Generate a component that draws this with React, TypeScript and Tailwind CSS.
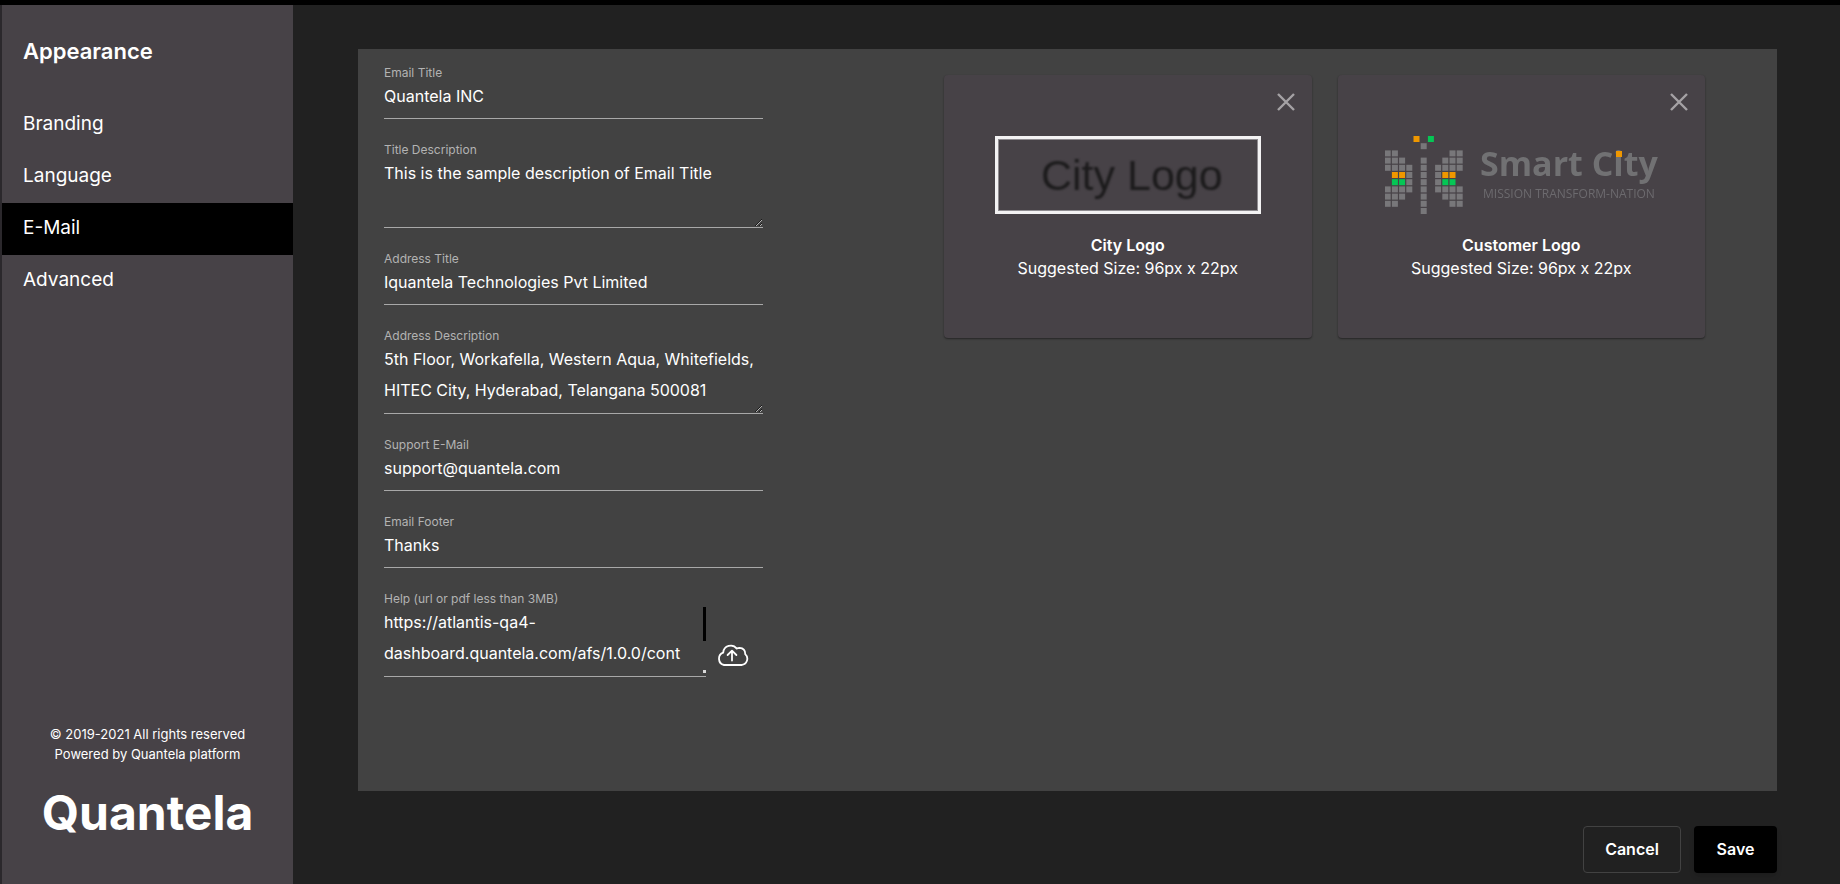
import React, { useState } from "react";

const MENU_ITEMS = ["Branding", "Language", "E-Mail", "Advanced"];

const INITIAL_VALUES = {
  emailTitle: "Quantela INC",
  titleDescription: "This is the sample description of Email Title",
  addressTitle: "Iquantela Technologies Pvt Limited",
  addressDescription:
    "5th Floor, Workafella, Western Aqua, Whitefields, HITEC City, Hyderabad, Telangana 500081",
  supportEmail: "support@quantela.com",
  emailFooter: "Thanks",
  help: "https://atlantis-qa4-dashboard.quantela.com/afs/1.0.0/cont",
};

type FormValues = typeof INITIAL_VALUES;

// g: gray, o: orange, e: green
const BUTTERFLY_ROWS = [
  "....o.e....",
  ".....g.....",
  "gg.......gg",
  "ggg..g..ggg",
  "gggg.g.gggg",
  ".oog.g.goo.",
  ".eeg.g.gee.",
  "gggg.g.gggg",
  "ggg..g..ggg",
  "gg...g...gg",
  ".....g.....",
];

const CELL_COLORS: Record<string, string> = {
  g: "#78777a",
  o: "#ef9700",
  e: "#05c655",
};

interface FieldProps {
  id: string;
  name: keyof FormValues;
  label: string;
  value: string;
  onChange: (
    e: React.ChangeEvent<HTMLInputElement | HTMLTextAreaElement>
  ) => void;
}

interface FieldLabelProps {
  htmlFor: string;
  children: React.ReactNode;
}

const FieldLabel = ({ htmlFor, children }: FieldLabelProps) => (
  <label
    htmlFor={htmlFor}
    className="block mb-0.5 text-xs leading-[13px] text-[#b3b3b3]"
  >
    {children}
  </label>
);

const InputField = ({ id, name, label, value, onChange }: FieldProps) => (
  <div>
    <FieldLabel htmlFor={id}>{label}</FieldLabel>
    <input
      id={id}
      type="text"
      name={name}
      value={value}
      onChange={onChange}
      className="block w-full h-[38px] pb-2 border-b border-[#a8a8a8] text-base text-white outline-none"
    />
  </div>
);

const TextareaField = ({ id, name, label, value, onChange }: FieldProps) => (
  <div>
    <FieldLabel htmlFor={id}>{label}</FieldLabel>
    <div className="border-b border-[#a8a8a8]">
      <textarea
        id={id}
        name={name}
        value={value}
        onChange={onChange}
        className="block w-full h-[69px] overflow-hidden resize-y text-base leading-[31px] text-white outline-none"
      />
    </div>
  </div>
);

const UploadIcon = () => (
  <svg
    viewBox="0 0 32 24"
    className="w-8 h-6"
    fill="none"
    stroke="currentColor"
    strokeWidth="1.8"
    strokeLinecap="round"
    strokeLinejoin="round"
  >
    <path d="M7 22H24.5A6.2 6.2 0 0 0 28.2 11.2Q28.4 5.2 22.6 4.8Q21 4.8 19.8 5.6A7.6 7.6 0 0 0 6.2 9.6A6.5 6.5 0 0 0 7 22Z" />
    <path d="M15 17.5V8M10.6 12L15 7.6L19.4 12" />
  </svg>
);

const CloseIcon = () => (
  <svg
    viewBox="0 0 18 18"
    className="w-[18px] h-[18px]"
    stroke="currentColor"
    strokeWidth="2.4"
  >
    <path d="M1 1L17 17M17 1L1 17" />
  </svg>
);

const CityLogo = () => (
  <svg viewBox="0 0 266 78" className="w-[266px] h-[78px]">
    <rect
      x="1.5"
      y="1.5"
      width="263"
      height="75"
      fill="none"
      stroke="#f3f2f3"
      strokeWidth="3"
    />
    <rect
      x="3.5"
      y="3.5"
      width="259"
      height="71"
      fill="none"
      stroke="#8f8c90"
    />
    <text
      x="46"
      y="54"
      fill="#1c1b1c"
      className="font-['Liberation_Sans',sans-serif] text-[43px] blur-[1px]"
    >
      City Logo
    </text>
  </svg>
);

const SmartCityLogo = () => (
  <svg viewBox="0 0 273 78" className="w-[273px] h-[78px]">
    <g className="blur-[0.7px]">
      {BUTTERFLY_ROWS.map((row, y) =>
        row
          .split("")
          .map((cell, x) =>
            cell === "." ? null : (
              <rect
                key={`${x}-${y}`}
                x={x * 7.2 - 0.3}
                y={y * 7.2}
                width="6"
                height="6"
                fill={CELL_COLORS[cell]}
              />
            )
          )
      )}
      <text
        x="95"
        y="40"
        fill="#717173"
        className="font-['Open_Sans',sans-serif] font-bold text-[34px]"
      >
        Smart City
      </text>
      <rect x="231" y="15" width="6" height="6" fill="#ef9700" />
      <text
        x="98"
        y="62"
        fill="#6c6a6e"
        className="font-['Open_Sans',sans-serif] text-xs"
      >
        MISSION TRANSFORM-NATION
      </text>
    </g>
  </svg>
);

interface LogoCardProps {
  title: string;
  children: React.ReactNode;
}

const LogoCard = ({ title, children }: LogoCardProps) => (
  <div className="relative flex-1 h-[263px] pt-[61px] flex flex-col items-center rounded bg-[#474247] shadow-[0_1px_2px_rgba(0,0,0,0.45)]">
    <button
      type="button"
      aria-label={`Remove ${title}`}
      className="absolute top-[18px] right-[17px] text-[#a5a2a5]"
    >
      <CloseIcon />
    </button>
    {children}
    <h3 className="mt-5 text-base leading-[23px] font-semibold">{title}</h3>
    <p className="text-base leading-[23px]">Suggested Size: 96px x 22px</p>
  </div>
);

const App = () => {
  const [selectedMenu, setSelectedMenu] = useState("E-Mail");
  const [values, setValues] = useState<FormValues>(INITIAL_VALUES);

  const handleChange = (
    e: React.ChangeEvent<HTMLInputElement | HTMLTextAreaElement>
  ) => {
    const { name, value } = e.target;
    setValues({ ...values, [name]: value });
  };

  const fieldProps = (name: keyof FormValues) => ({
    id: name,
    name,
    value: values[name],
    onChange: handleChange,
  });

  return (
    <div className="min-h-screen flex flex-col bg-[#212121] text-white font-['Inter',sans-serif]">
      <div className="h-[5px] bg-black" />

      <div className="flex-1 flex">
        <aside className="w-[293px] shrink-0 flex flex-col border-l-2 border-[#2b282c] bg-[#474247]">
          <h1 className="pl-[21px] pt-8 text-[22px] leading-7 font-semibold">
            Appearance
          </h1>

          <nav className="mt-[34px] flex flex-col">
            {MENU_ITEMS.map((item) => (
              <a
                key={item}
                href="#"
                onClick={() => setSelectedMenu(item)}
                className={`h-[52px] pl-[21px] pb-0.5 flex items-center text-[19px] ${
                  item === selectedMenu ? "bg-black" : ""
                }`}
              >
                {item}
              </a>
            ))}
          </nav>

          <footer className="mt-auto mb-[42px] text-center">
            <p className="text-[13px] leading-5">
              © 2019-2021 All rights reserved
            </p>
            <p className="text-[13px] leading-5">
              Powered by Quantela platform
            </p>
            <p className="mt-5 text-5xl leading-[58px] font-bold">Quantela</p>
          </footer>
        </aside>

        <main className="flex-1 flex flex-col pl-[65px] pr-[63px] pt-11 pb-[11px]">
          <section className="flex-1 flex justify-between pl-[26px] pr-[72px] bg-[#424242]">
            <form className="w-[379px] pt-[17px] flex flex-col gap-6">
              <InputField label="Email Title" {...fieldProps("emailTitle")} />
              <TextareaField
                label="Title Description"
                {...fieldProps("titleDescription")}
              />
              <InputField
                label="Address Title"
                {...fieldProps("addressTitle")}
              />
              <TextareaField
                label="Address Description"
                {...fieldProps("addressDescription")}
              />
              <InputField
                label="Support E-Mail"
                {...fieldProps("supportEmail")}
              />
              <InputField label="Email Footer" {...fieldProps("emailFooter")} />

              <div className="flex items-end gap-[11px]">
                <div className="w-[322px]">
                  <FieldLabel htmlFor="help">
                    Help (url or pdf less than 3MB)
                  </FieldLabel>
                  <div className="relative border-b border-[#a8a8a8]">
                    <textarea
                      {...fieldProps("help")}
                      className="block w-full h-[69px] overflow-hidden resize-none text-base leading-[31px] text-white outline-none"
                    />
                    {/* scrollbar */}
                    <span className="absolute right-0 top-0 w-[3px] h-[34px] bg-black" />
                    <span className="absolute right-0 bottom-[3px] w-[3px] h-[3px] bg-[#d9d9d9]" />
                  </div>
                </div>
                <button
                  type="button"
                  aria-label="Upload file"
                  className="mb-2.5"
                >
                  <UploadIcon />
                </button>
              </div>
            </form>

            <div className="w-[761px] pt-[26px] flex items-start gap-[26px]">
              <LogoCard title="City Logo">
                <CityLogo />
              </LogoCard>
              <LogoCard title="Customer Logo">
                <SmartCityLogo />
              </LogoCard>
            </div>
          </section>

          <div className="mt-[35px] flex justify-end gap-[13px]">
            <button
              type="button"
              className="w-[98px] h-[47px] pb-0.5 rounded border border-[#424242] text-base font-semibold"
            >
              Cancel
            </button>
            <button
              type="button"
              className="w-[83px] h-[47px] pb-0.5 rounded bg-black text-base font-semibold shadow-md"
            >
              Save
            </button>
          </div>
        </main>
      </div>
    </div>
  );
};

export default App;
